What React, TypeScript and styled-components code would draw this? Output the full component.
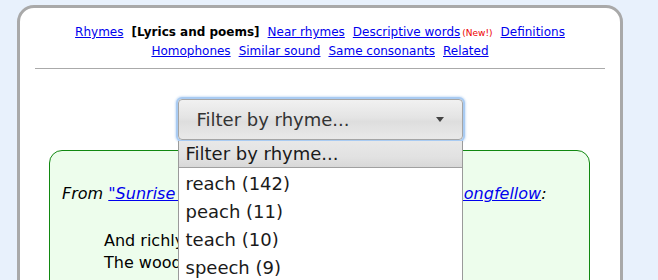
import React from "react";
import styled, { createGlobalStyle } from "styled-components";

const GlobalStyle = createGlobalStyle`
  body {
    margin: 0;
    background: #e8f1fc;
    font-family: "DejaVu Sans", Verdana, sans-serif;
  }
`;

const Card = styled.div`
  margin: 5px 0 0 17px;
  width: 600px;
  min-height: 400px;
  background: #fff;
  border: 3px solid #a9a9a9;
  border-radius: 17px;
`;

const Nav = styled.div`
  padding-top: 15px;
  text-align: center;
  font-size: 12px;
  line-height: 18px;
`;

const NavLink = styled.a<{ $tight?: boolean }>`
  color: #0000ee;
  text-decoration: underline;
  margin: 0 ${(p) => (p.$tight ? "0" : "4px")} 0 4px;
`;

const Current = styled.b`
  color: #000;
  margin: 0 4px;
`;

const NewTag = styled.span`
  color: #e00;
  font-size: 9px;
  margin: 0 4px 0 2px;
`;

const Rule = styled.div`
  margin: 8px 15px 0;
  border-top: 1px solid #aaa;
`;

const SelectWrap = styled.div`
  position: relative;
  width: 285px;
  margin: 30px auto 0;
`;

const SelectBox = styled.div`
  height: 39px;
  border: 1px solid #a5a5a5;
  border-radius: 4px;
  box-shadow: 0 0 0 2px #a9cbf2, 0 0 2px 3px #d3e4f8;
  background: linear-gradient(#f1f1f1, #e4e4e4 45%, #dedede 55%, #e9e9e9);
  display: flex;
  align-items: center;
  justify-content: space-between;
  padding: 0 18px;
  font-size: 18px;
  color: #333;
`;

const Arrow = styled.svg`
  width: 8px;
  height: 5px;
`;

const Menu = styled.div`
  position: absolute;
  top: 42px;
  left: 0;
  width: 283px;
  background: #fff;
  border-left: 1px solid #9a9a9a;
  border-right: 1px solid #9a9a9a;
  font-size: 18px;
  color: #1a1a1a;
  z-index: 2;
`;

const MenuItem = styled.div<{ $active?: boolean }>`
  height: ${(p) => (p.$active ? "26px" : "28px")};
  line-height: ${(p) => (p.$active ? "26px" : "28px")};
  padding-left: 7px;
  background: ${(p) =>
    p.$active ? "linear-gradient(#e8e8e8, #e2e2e2 60%, #d8d8d8)" : "transparent"};
  border-bottom: ${(p) => (p.$active ? "1px solid #a0a0a0" : "none")};
  margin-bottom: ${(p) => (p.$active ? "2px" : "0")};
`;

const Quote = styled.div`
  margin: 10px 30px 0 29px;
  border: 1px solid #118811;
  border-radius: 13px;
  background: #edfdec;
  padding: 32px 12px 40px;
  font-size: 16px;
  line-height: 22px;
  color: #000;
`;

const Source = styled.div`
  font-style: italic;
`;

const SourceLink = styled.a`
  color: #0000ee;
  text-decoration: underline;
`;

const Poem = styled.div`
  margin-top: 25px;
  padding-left: 42px;
`;

const rhymes = [
  ["reach", 142],
  ["peach", 11],
  ["teach", 10],
  ["speech", 9],
  ["beach", 8],
];

export default function App() {
  return (
    <>
      <GlobalStyle />
      <Card>
        <Nav>
          <div>
            <NavLink href="#">Rhymes</NavLink>
            <Current>[Lyrics and poems]</Current>
            <NavLink href="#">Near rhymes</NavLink>
            <NavLink href="#" $tight>Descriptive words</NavLink>
            <NewTag>(New!)</NewTag>
            <NavLink href="#">Definitions</NavLink>
          </div>
          <div>
            <NavLink href="#">Homophones</NavLink>
            <NavLink href="#">Similar sound</NavLink>
            <NavLink href="#">Same consonants</NavLink>
            <NavLink href="#">Related</NavLink>
          </div>
        </Nav>
        <Rule />
        <SelectWrap>
          <SelectBox>
            <span>Filter by rhyme...</span>
            <Arrow viewBox="0 0 8 5">
              <path d="M0 0 L8 0 L4 5 Z" fill="#444" />
            </Arrow>
          </SelectBox>
          <Menu>
            <MenuItem $active>Filter by rhyme...</MenuItem>
            {rhymes.map(([word, count]) => (
              <MenuItem key={word}>
                {word} ({count})
              </MenuItem>
            ))}
          </Menu>
        </SelectWrap>
        <Quote>
          <Source>
            From{" "}
            <SourceLink href="#">
              "Sunrise on the Hills" by Henry Wadsworth Longfellow
            </SourceLink>
            :
          </Source>
          <Poem>
            And richly, by the blue lake's silver beach,
            <br />
            The woods were bending with a silent reach.
          </Poem>
        </Quote>
      </Card>
    </>
  );
}
